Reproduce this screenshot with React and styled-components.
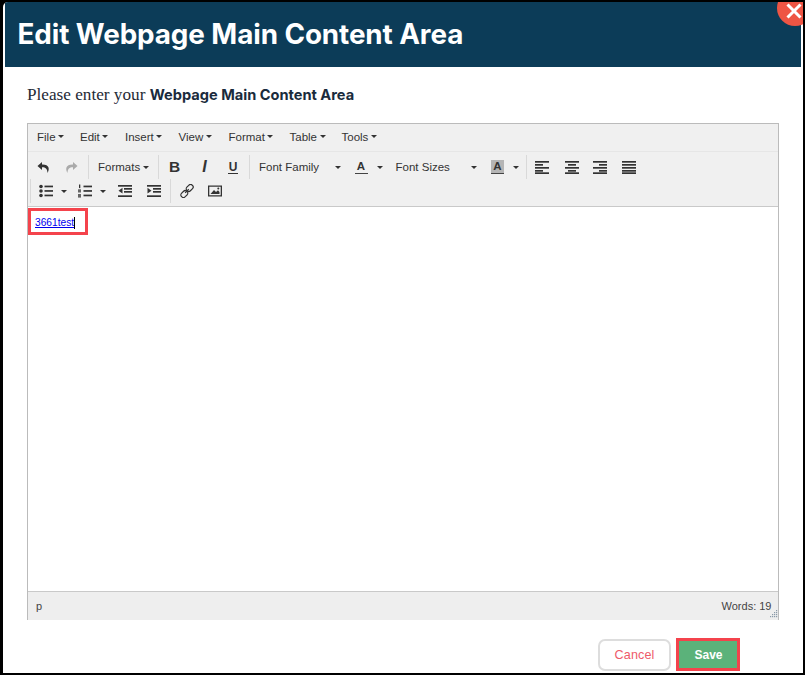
import React from "react";
import styled, { createGlobalStyle } from "styled-components";

const Global = createGlobalStyle`
  html, body { margin: 0; padding: 0; background: #000; overflow: hidden; }
  * { box-sizing: border-box; }
`;
const Frame = styled.div`
  width: 805px; height: 675px; padding: 2px 2px 2px 3px; background: #000; display: flex;
`;
const Modal = styled.div`
  position: relative; flex: 1; background: #fff; border-top-left-radius: 5px; overflow: hidden;
  padding: 0 2px; display: flex; flex-direction: column;
`;
const Header = styled.header`
  height: 65px; background: #0c3c58; display: flex; align-items: center; padding: 0 12.5px 1px;
`;
const Title = styled.h1`
  margin: 0; color: #fff; font: 700 27.8px Inter, sans-serif; letter-spacing: -0.08px;
`;
const Close = styled.button`
  position: absolute; top: -12px; right: -10px; width: 36px; height: 36px; border: 0; padding: 0;
  border-radius: 50%; background: #ee5544; display: flex; align-items: center; justify-content: center;
  svg { margin: 6px 2px 0 0; }
`;
const Body = styled.main`
  flex: 1; padding: 18px 22px 0; display: flex; flex-direction: column;
`;
const Prompt = styled.p`
  margin: 0 0 19px; height: 19px; font: 17.2px/19px "Liberation Serif", serif; color: #1f2a36;
  strong { font: 700 14.6px/19px Inter, sans-serif; color: #1a2b3c; }
`;
const Editor = styled.section`
  width: 752px; height: 497px; border: 1px solid #bbb; border-bottom: 0; display: flex; flex-direction: column;
  font-family: "Liberation Sans", Arial, sans-serif; color: #333;
`;
const MenuBar = styled.nav`
  height: 28px; background: #f0f0f0; border-bottom: 1px solid #e6e6e6; display: flex; align-items: center; padding: 0 0 2px 9px;
`;
const MenuItem = styled.span`
  display: flex; align-items: center; font-size: 11.5px; width: ${p => p.$w}px; flex: none;
`;
const Caret = styled.i`
  display: inline-block; width: 0; height: 0; border: 3.5px solid transparent; border-top-color: #333; border-bottom: 0;
  margin-left: ${p => p.$ml ?? 2.5}px; flex: none;
`;
const Toolbar = styled.div`
  height: 55px; background: #f0f0f0; border-bottom: 1px solid #c9c9c9; padding: 3px 0 0 1px;
  display: flex; flex-direction: column;
`;
const ToolRow = styled.div`
  height: 24px; display: flex; align-items: center; padding-left: ${p => p.$pl || 0}px;
`;
const Group = styled.div`
  height: 24px; display: flex; align-items: center; flex: none; width: ${p => p.$w ? p.$w + "px" : "auto"};
  border-left: ${p => p.$sep ? "1px solid #d9d9d9" : "0"};
`;
const Tool = styled.span`
  width: ${p => p.$w || 28.67}px; height: 24px; flex: none; display: flex; align-items: center;
  justify-content: ${p => p.$left ? "flex-start" : "center"}; padding-left: ${p => p.$pl || 0}px;
  font-size: 11.5px; color: #333;
`;
const Glyph = styled.span`
  font: ${p => p.$italic ? "italic 700 16px" : "700 15.5px"} "Liberation Sans", sans-serif; color: #333;
  ${p => p.$under && "font-size: 12px; line-height: 12px; border-bottom: 1.5px solid #333; padding: 0 1px;"}
`;
const ColorA = styled.span`
  width: 13px; height: 14px; display: flex; align-items: center; justify-content: center; font: 700 11.5px/13px "Liberation Sans", sans-serif;
  color: #333; border-bottom: 1px solid #444; background: ${p => p.$bg ? "#b5b5b5" : "transparent"};
`;
const Content = styled.div`
  flex: 1; background: #fff; padding: 1px 0 0 0;
`;
const Highlight = styled.span`
  display: inline-flex; align-items: center; width: 60px; height: 27px; border: 3px solid #f4434c; padding: 3px 0 0 4px;
`;
const Link = styled.a`
  font: 10.2px/12px "Liberation Sans", Arial, sans-serif; color: #0000ee; text-decoration: underline;
  border-right: 1px solid #000;
`;
const Status = styled.footer`
  height: 29px; background: #eee; border-top: 1px solid #c9c9c9; display: flex; align-items: center; justify-content: space-between;
  padding: 0 1px 0 8px; font-size: 11px; color: #444; position: relative;
`;
const Words = styled.span` margin-right: 5.5px; `;
const Grip = styled.svg`
  position: absolute; right: 0; bottom: 2px;
`;
const Footer = styled.div`
  display: flex; justify-content: flex-end; align-items: center; gap: 5px; padding: 18px 39px 0 0;
`;
const Cancel = styled.button`
  width: 73px; height: 32px; background: #fff; border: 2px solid #ddd; border-radius: 7px; color: #ee5a6a;
  font: 12.6px "Liberation Sans", sans-serif; letter-spacing: 0.1px; padding: 0;
`;
const SaveMark = styled.span`
  display: block; border: 3px solid #f4434c; width: 64px; height: 33px;
`;
const Save = styled.button`
  width: 100%; height: 100%; border: 0; background: #5bb27a; color: #fff; font: 700 12px "Liberation Sans", sans-serif; padding: 0 0 0 1px;
`;

const Ic = ({ children, w = 14, h = 14 }) => (
  <svg width={w} height={h} viewBox={`0 0 ${w} ${h}`} fill="#333">{children}</svg>
);
const Undo = ({ c = "#333" }) => (
  <svg width="13" height="13" viewBox="0 0 13 13"><path d="M5 1 L0.5 5 L5 9 V6.2 C8 6 10.4 7.5 10.5 12 C12.8 8 12.4 3.2 5 3.4 Z" fill={c} /></svg>
);
const Redo = ({ c = "#aaa" }) => (
  <svg width="13" height="13" viewBox="0 0 13 13"><path d="M8 1 L12.5 5 L8 9 V6.2 C5 6 2.6 7.5 2.5 12 C0.2 8 0.6 3.2 8 3.4 Z" fill={c} /></svg>
);
const Lines = ({ rows }) => (
  <Ic>{rows.map(([x, y, w], i) => <rect key={i} x={x} y={y} width={w} height="1.7" />)}</Ic>
);
const alignL = [[0, 1, 14], [0, 4, 8], [0, 7, 14], [0, 10, 8], [0, 12.3, 14]];
const alignC = [[0, 1, 14], [3, 4, 8], [0, 7, 14], [3, 10, 8], [0, 12.3, 14]];
const alignR = [[0, 1, 14], [6, 4, 8], [0, 7, 14], [6, 10, 8], [0, 12.3, 14]];
const alignJ = [[0, 1, 14], [0, 4, 14], [0, 7, 14], [0, 10, 14], [0, 12.3, 14]];
const Bullets = () => (
  <Ic>
    <circle cx="2" cy="2.5" r="1.8" /><circle cx="2" cy="7" r="1.8" /><circle cx="2" cy="11.5" r="1.8" />
    <rect x="5.5" y="1.6" width="8.5" height="1.7" /><rect x="5.5" y="6.1" width="8.5" height="1.7" /><rect x="5.5" y="10.6" width="8.5" height="1.7" />
  </Ic>
);
const Numbers = () => (
  <Ic>
    <rect x="1" y="0.5" width="1.3" height="3.6" /><rect x="0" y="5.3" width="3" height="3.2" fill="#666" /><rect x="0" y="10" width="3" height="3.6" fill="#666" />
    <rect x="5.5" y="1.6" width="8.5" height="1.7" /><rect x="5.5" y="6.1" width="8.5" height="1.7" /><rect x="5.5" y="10.6" width="8.5" height="1.7" />
  </Ic>
);
const Outdent = () => (
  <Ic>
    <rect x="0" y="1" width="14" height="1.7" /><rect x="6" y="4" width="8" height="1.7" /><rect x="6" y="7" width="8" height="1.7" /><rect x="0" y="11.3" width="14" height="1.7" />
    <path d="M4.5 3.8 V9.6 L0.5 6.7 Z" />
  </Ic>
);
const Indent = () => (
  <Ic>
    <rect x="0" y="1" width="14" height="1.7" /><rect x="6" y="4" width="8" height="1.7" /><rect x="6" y="7" width="8" height="1.7" /><rect x="0" y="11.3" width="14" height="1.7" />
    <path d="M0.5 3.8 V9.6 L4.5 6.7 Z" />
  </Ic>
);
const LinkIcon = () => (
  <svg width="14" height="14" viewBox="0 0 14 14" fill="none" stroke="#333" strokeWidth="1.2">
    <rect x="7.2" y="0.2" width="5" height="7.4" rx="2.2" transform="rotate(45 9.7 3.9)" />
    <rect x="1.8" y="6.4" width="5" height="7.4" rx="2.2" transform="rotate(45 4.3 10.1)" />
    <path d="M5.2 8.8 L8.8 5.2" />
  </svg>
);
const ImageIcon = () => (
  <Ic>
    <path fillRule="evenodd" d="M0 1.5 H14 V12.5 H0 Z M1.3 2.8 V11.2 H12.7 V2.8 Z" />
    <path d="M2.5 10 L6 6 L8 8 L10 6.3 L11.5 8 V10 Z" /><circle cx="10.3" cy="4.5" r="1" />
  </Ic>
);

const menus = [["File", 43], ["Edit", 45], ["Insert", 53.5], ["View", 50], ["Format", 61], ["Table", 52], ["Tools", 45]];

export default function App() {
  return (
    <>
      <Global />
      <Frame>
        <Modal>
          <Header><Title>Edit Webpage Main Content Area</Title></Header>
          <Close aria-label="Close">
            <svg width="16" height="16" viewBox="0 0 16 16"><path d="M1.5 1.5 L14.5 14.5 M14.5 1.5 L1.5 14.5" stroke="#fff" strokeWidth="3" /></svg>
          </Close>
          <Body>
            <Prompt>Please enter your <strong>Webpage Main Content Area</strong></Prompt>
            <Editor>
              <MenuBar>
                {menus.map(([m, w]) => <MenuItem key={m} $w={w}>{m}<Caret /></MenuItem>)}
              </MenuBar>
              <Toolbar>
                <ToolRow>
                  <Group $w={59}>
                    <Tool $w={28}><Undo /></Tool>
                    <Tool $w={29}><Redo /></Tool>
                  </Group>
                  <Group $sep $w={70}>
                    <Tool $w={69} $left $pl={9}>Formats<Caret $ml={2.5} /></Tool>
                  </Group>
                  <Group $sep $w={91}>
                    <Tool $w={31}><Glyph>B</Glyph></Tool>
                    <Tool $w={29}><Glyph $italic>I</Glyph></Tool>
                    <Tool $w={28}><Glyph $under>U</Glyph></Tool>
                  </Group>
                  <Group $sep $w={277}>
                    <Tool $w={96} $left $pl={9}>Font Family<Caret $ml={16} /></Tool>
                    <Tool $w={42} $left $pl={8.5}><ColorA>A</ColorA><Caret $ml={9} /></Tool>
                    <Tool $w={94} $left $pl={7.5}>Font Sizes<Caret $ml={21} /></Tool>
                    <Tool $w={44} $left $pl={9}><ColorA $bg>A</ColorA><Caret $ml={9} /></Tool>
                  </Group>
                  <Group $sep>
                    <Tool $w={30.5}><Lines rows={alignL} /></Tool>
                    <Tool><Lines rows={alignC} /></Tool>
                    <Tool><Lines rows={alignR} /></Tool>
                    <Tool><Lines rows={alignJ} /></Tool>
                  </Group>
                </ToolRow>
                <ToolRow $pl={1}>
                  <Group $sep $w={140}>
                    <Tool $w={30}><Bullets /></Tool>
                    <Tool $w={8} $left><Caret $ml={0} /></Tool>
                    <Tool $w={31}><Numbers /></Tool>
                    <Tool $w={8} $left><Caret $ml={0} /></Tool>
                    <Tool $w={34}><Outdent /></Tool>
                    <Tool $w={24}><Indent /></Tool>
                  </Group>
                  <Group $sep>
                    <Tool $w={32}><LinkIcon /></Tool>
                    <Tool $w={24.5}><ImageIcon /></Tool>
                  </Group>
                </ToolRow>
              </Toolbar>
              <Content>
                <Highlight><Link href="#">3661test</Link></Highlight>
              </Content>
              <Status>
                <span>p</span>
                <Words>Words: 19</Words>
                <Grip width="8" height="8" viewBox="0 0 8 8" fill="#8a9aa8">
                  <rect x="6" y="0" width="1.2" height="1.2" /><rect x="4" y="2" width="1.2" height="1.2" /><rect x="6" y="2" width="1.2" height="1.2" />
                  <rect x="2" y="4" width="1.2" height="1.2" /><rect x="4" y="4" width="1.2" height="1.2" /><rect x="6" y="4" width="1.2" height="1.2" />
                  <rect x="0" y="6" width="1.2" height="1.2" /><rect x="2" y="6" width="1.2" height="1.2" /><rect x="4" y="6" width="1.2" height="1.2" /><rect x="6" y="6" width="1.2" height="1.2" />
                </Grip>
              </Status>
            </Editor>
            <Footer>
              <Cancel>Cancel</Cancel>
              <SaveMark><Save>Save</Save></SaveMark>
            </Footer>
          </Body>
        </Modal>
      </Frame>
    </>
  );
}
